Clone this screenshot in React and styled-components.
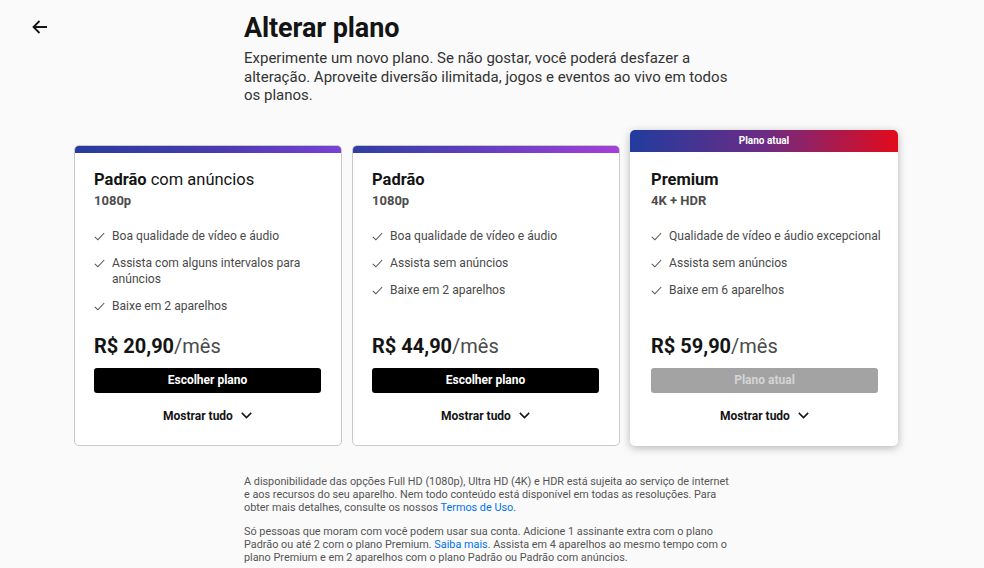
import React from 'react';
import styled, { createGlobalStyle } from 'styled-components';

const Global = createGlobalStyle`
  body {
    margin: 0;
    background: #fafafa;
    font-family: Roboto, "Liberation Sans", sans-serif;
    color: #141414;
  }
`;

const Page = styled.div`
  width: 984px;
  min-height: 568px;
  overflow: hidden;
`;

const Header = styled.header`
  display: grid;
  grid-template-columns: 244px 490px;
  padding-top: 11px;
`;

const BackButton = styled.button`
  align-self: start;
  justify-self: start;
  margin: 8px 0 0 31px;
  padding: 0;
  border: none;
  background: none;
  color: #141414;
  display: flex;
  cursor: pointer;
`;

const Title = styled.h1`
  margin: 0;
  font-size: 27px;
  line-height: 34px;
  font-weight: 700;
  letter-spacing: -0.1px;
`;

const Lead = styled.p`
  margin: 4px 0 0;
  font-size: 15px;
  line-height: 18.5px;
  color: #333;
`;

const Plans = styled.div`
  display: flex;
  align-items: flex-end;
  gap: 10px;
  padding-left: 74px;
  margin-top: 25px;
`;

const Card = styled.div`
  width: 268px;
  box-sizing: border-box;
  display: flex;
  flex-direction: column;
  border-radius: 5px;
  overflow: hidden;
  background: #fff;
  box-shadow: ${p => (p.$current ? '0 2px 8px rgba(0,0,0,0.28)' : 'none')};
  border: ${p => (p.$current ? 'none' : '1px solid #c9c9c9')};
`;

const Bar = styled.div`
  height: ${p => (p.$label ? '22px' : '7px')};
  background: ${p => p.$gradient};
  color: #fff;
  font-size: 10px;
  font-weight: 700;
  display: flex;
  align-items: center;
  justify-content: center;
`;

const Body = styled.div`
  height: ${p => (p.$current ? '294px' : '292px')};
  box-sizing: border-box;
  padding: ${p => (p.$current ? '18px 16px 22px 21px' : '17px 16px 21px 19px')};
  display: flex;
  flex-direction: column;
`;

const Name = styled.div`
  font-size: 16.5px;
  line-height: 20px;
  font-weight: 400;
  b {
    font-weight: 700;
  }
`;

const Resolution = styled.div`
  margin-top: 2px;
  font-size: 13px;
  line-height: 18px;
  font-weight: 700;
  color: #4d4d4d;
`;

const Features = styled.ul`
  list-style: none;
  margin: 18px 0 0;
  padding: 0;
  display: flex;
  flex-direction: column;
  gap: 11px;
`;

const Feature = styled.li`
  display: flex;
  gap: 7px;
  font-size: 12.1px;
  line-height: 16px;
  color: #4a4a4a;
  svg {
    flex: none;
    margin-top: 4px;
  }
`;

const Bottom = styled.div`
  margin-top: auto;
  margin-right: 4px;
  display: flex;
  flex-direction: column;
`;

const Price = styled.div`
  font-size: 20px;
  line-height: 24px;
  font-weight: 700;
  span {
    font-weight: 400;
    color: #4a4a4a;
  }
`;

const ChooseButton = styled.button`
  margin-top: 10px;
  height: 25px;
  border: none;
  border-radius: 3px;
  background: ${p => (p.disabled ? '#a3a3a3' : '#000')};
  color: ${p => (p.disabled ? '#d4d4d4' : '#fff')};
  font-family: inherit;
  font-size: 12px;
  font-weight: 700;
`;

const ShowAll = styled.button`
  margin-top: 15px;
  align-self: center;
  display: flex;
  align-items: center;
  gap: 8px;
  border: none;
  background: none;
  padding: 0;
  font-family: inherit;
  font-size: 12px;
  line-height: 16px;
  font-weight: 700;
  color: #141414;
`;

const Notes = styled.div`
  margin: 29px 0 0 244px;
  width: 486px;
  font-size: 10.85px;
  line-height: 13px;
  color: #555;
  p {
    margin: 0 0 11px;
  }
  a {
    color: #0071eb;
    text-decoration: none;
  }
`;

const Check = () => (
  <svg width="11" height="9" viewBox="0 0 11 9" fill="none">
    <path d="M0.8 4.8 L3.9 7.8 L10.2 1" stroke="#555" strokeWidth="1.1" />
  </svg>
);

const Chevron = () => (
  <svg width="11" height="7" viewBox="0 0 11 7" fill="none">
    <path d="M0.8 0.9 L5.5 5.6 L10.2 0.9" stroke="#141414" strokeWidth="1.5" />
  </svg>
);

const plans = [
  {
    name: 'Padrão',
    suffix: ' com anúncios',
    resolution: '1080p',
    features: ['Boa qualidade de vídeo e áudio', 'Assista com alguns intervalos para anúncios', 'Baixe em 2 aparelhos'],
    price: 'R$ 20,90',
    gradient: 'linear-gradient(90deg, #283c9c 0%, #4a3bb0 55%, #7941d6 100%)',
  },
  {
    name: 'Padrão',
    suffix: '',
    resolution: '1080p',
    features: ['Boa qualidade de vídeo e áudio', 'Assista sem anúncios', 'Baixe em 2 aparelhos'],
    price: 'R$ 44,90',
    gradient: 'linear-gradient(90deg, #2f3ea2 0%, #6a3fc4 55%, #a53fd8 100%)',
  },
  {
    name: 'Premium',
    suffix: '',
    resolution: '4K + HDR',
    features: ['Qualidade de vídeo e áudio excepcional', 'Assista sem anúncios', 'Baixe em 6 aparelhos'],
    price: 'R$ 59,90',
    gradient: 'linear-gradient(90deg, #213c9e 0%, #6c2c84 50%, #e30a1c 100%)',
    current: true,
  },
];

export default function App() {
  return (
    <Page>
      <Global />
      <Header>
        <BackButton aria-label="Voltar">
          <svg width="18" height="16" viewBox="0 0 18 16" fill="none">
            <path d="M16 8 H2.5 M8.5 2 L2.5 8 L8.5 14" stroke="#141414" strokeWidth="1.8" />
          </svg>
        </BackButton>
        <div>
          <Title>Alterar plano</Title>
          <Lead>
            Experimente um novo plano. Se não gostar, você poderá desfazer a alteração. Aproveite diversão
            ilimitada, jogos e eventos ao vivo em todos os planos.
          </Lead>
        </div>
      </Header>

      <Plans>
        {plans.map(plan => (
          <Card key={plan.price} $current={plan.current}>
            <Bar $gradient={plan.gradient} $label={plan.current}>
              {plan.current && 'Plano atual'}
            </Bar>
            <Body $current={plan.current}>
              <Name>
                <b>{plan.name}</b>
                {plan.suffix}
              </Name>
              <Resolution>{plan.resolution}</Resolution>
              <Features>
                {plan.features.map(f => (
                  <Feature key={f}>
                    <Check />
                    <span>{f}</span>
                  </Feature>
                ))}
              </Features>
              <Bottom>
                <Price>
                  {plan.price}
                  <span>/mês</span>
                </Price>
                <ChooseButton disabled={plan.current}>
                  {plan.current ? 'Plano atual' : 'Escolher plano'}
                </ChooseButton>
                <ShowAll>
                  Mostrar tudo <Chevron />
                </ShowAll>
              </Bottom>
            </Body>
          </Card>
        ))}
      </Plans>

      <Notes>
        <p>
          A disponibilidade das opções Full HD (1080p), Ultra HD (4K) e HDR está sujeita ao serviço de internet
          e aos recursos do seu aparelho. Nem todo conteúdo está disponível em todas as resoluções. Para
          obter mais detalhes, consulte os nossos <a href="#">Termos de Uso</a>.
        </p>
        <p>
          Só pessoas que moram com você podem usar sua conta. Adicione 1 assinante extra com o plano
          Padrão ou até 2 com o plano Premium. <a href="#">Saiba mais</a>. Assista em 4 aparelhos ao mesmo
          tempo com o plano Premium e em 2 aparelhos com o plano Padrão ou Padrão com anúncios.
        </p>
      </Notes>
    </Page>
  );
}
